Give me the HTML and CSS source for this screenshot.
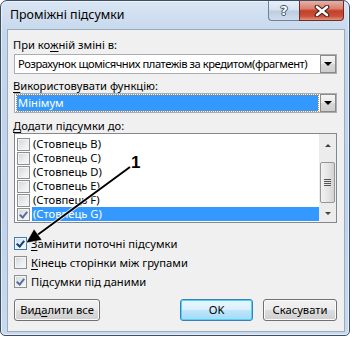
FILE: index.html
```html
<!DOCTYPE html>
<html lang="uk">
<head>
    <meta charset="UTF-8">
    <title>Проміжні підсумки</title>
    <link rel="stylesheet" href="styles.css">
</head>
<body>
  <div class="window">
    <div class="titlebar">
      <span class="title">Проміжні підсумки</span>
      <div class="cbtn help">?</div>
      <div class="cbtn close">
        <svg width="16" height="12" viewBox="0 0 16 12">
          <path d="M3 2 L13 10 M13 2 L3 10" stroke="#3b1c18" stroke-width="4.6" stroke-linecap="round"/>
          <path d="M3 2 L13 10 M13 2 L3 10" stroke="#fff" stroke-width="2.6" stroke-linecap="round"/>
        </svg>
      </div>
    </div>

    <div class="client">
      <div class="label l1">При ко<u>ж</u>ній зміні в:</div>
      <div class="combo">
        <div class="combo-text long">Розрахунок щомісячних платежів за кредитом(фрагмент)</div>
        <div class="drop"><span class="tri"></span></div>
      </div>

      <div class="label l2"><u>В</u>икористовувати функцію:</div>
      <div class="combo">
        <div class="combo-text"><span class="sel">Мінімум</span></div>
        <div class="drop"><span class="tri"></span></div>
      </div>

      <div class="label l3"><u>Д</u>одати підсумки до:</div>
      <div class="list">
        <div class="items">
          <div class="item"><span class="box"></span><span class="txt">(Стовпець B)</span></div>
          <div class="item"><span class="box"></span><span class="txt">(Стовпець C)</span></div>
          <div class="item"><span class="box"></span><span class="txt">(Стовпець D)</span></div>
          <div class="item"><span class="box"></span><span class="txt">(Стовпець E)</span></div>
          <div class="item"><span class="box"></span><span class="txt">(Стовпець F)</span></div>
          <div class="item"><span class="box checked light"></span><span class="txt active">(Стовпець G)</span></div>
        </div>
        <div class="scroll">
          <div class="sarrow"><span class="up"></span></div>
          <div class="thumb"><span class="grip"></span></div>
          <div class="sarrow"><span class="down"></span></div>
        </div>
      </div>

      <div class="checks">
        <div class="check"><span class="box checked focus"></span><span><u>З</u>амінити поточні підсумки</span></div>
        <div class="check"><span class="box"></span><span><u>К</u>інець сторінки між групами</span></div>
        <div class="check"><span class="box checked light"></span><span>Підсумки під даними</span></div>
      </div>

      <div class="buttons">
        <div class="btn">Вид<u>а</u>лити все</div>
        <div class="btn default">OK</div>
        <div class="btn">Скасувати</div>
      </div>
    </div>

    <svg class="annot" width="350" height="336" viewBox="0 0 350 336">
      <line x1="130" y1="167" x2="36" y2="236" stroke="#fff" stroke-width="4" stroke-opacity="0.7"/>
      <line x1="130" y1="167" x2="36" y2="236" stroke="#000" stroke-width="2"/>
      <polygon points="26,243 34,229 42,240" fill="#000" stroke="#fff" stroke-width="0.8" stroke-opacity="0.6"/>
      <text x="131" y="168" class="num">1</text>
    </svg>
  </div>
</body>
</html>
```

FILE: styles.css
```css
body{
    margin: 0;
    background: #fff;
    font-family: "Segoe UI", "Noto Sans", sans-serif;
    font-size: 11.2px;
    color: #000;
}
u{
    text-decoration: underline;
    text-underline-offset: 2px;
}

.window{
    position: relative;
    box-sizing: border-box;
    width: 350px;
    height: 336px;
    border: 1px solid #3b4f66;
    border-radius: 7px 7px 5px 5px;
    background: linear-gradient(to bottom, #d9e5f3 0%, #c5d7ec 10%, #bfd2ea 60%, #c9daee 100%);
    box-shadow: inset 0 0 0 1px rgba(255,255,255,0.55);
    padding: 0 4px 3px 6px;
    display: flex;
    flex-direction: column;
}

/* title bar */
.titlebar{
    height: 28px;
    display: flex;
    align-items: flex-start;
}
.title{
    margin: 6px 0 0 3px;
    line-height: 16px;
    font-size: 12.4px;
    color: #000;
}
.cbtn{
    box-sizing: border-box;
    height: 20px;
    display: flex;
    align-items: center;
    justify-content: center;
}
.help{
    margin-left: auto;
    width: 31px;
    border: 1px solid #6d8198;
    border-top: none;
    border-right: none;
    border-radius: 0 0 0 4px;
    background: linear-gradient(to bottom, #e8eff8 0%, #d5e1ee 48%, #bccde2 52%, #cfdcec 100%);
    color: #fff;
    font-family: "DejaVu Sans", sans-serif;
    font-weight: bold;
    font-size: 13px;
    text-shadow: 1px 0 0 #3e4f63, -1px 0 0 #3e4f63, 0 1px 0 #3e4f63, 0 -1px 0 #3e4f63;
}
.close{
    width: 45px;
    margin-right: 1px;
    border: 1px solid #6b2d24;
    border-top: none;
    border-radius: 0 0 4px 0;
    background: linear-gradient(to bottom, #eab0a2 0%, #d8816f 40%, #c43f2b 52%, #cc5039 80%, #e3927d 100%);
}

/* client area */
.client{
    flex: 1;
    background: #f0f0f0;
    border: 1px solid #9aabc0;
    padding: 7px 7px 0 6px;
    display: flex;
    flex-direction: column;
}
.label{
    line-height: 15px;
    height: 15px;
    margin-left: -1px;
}
.l2{ margin-top: 4px; }
.l3{ margin-top: 5px; }

.combo{
    box-sizing: border-box;
    height: 20px;
    margin-top: 2px;
    border: 1px solid #abadb3;
    background: #fff;
    display: flex;
}
.l2 + .combo{ margin-top: 0; }
.combo-text{
    flex: 1;
    padding: 1px 2px 1px 3px;
    line-height: 16px;
    white-space: nowrap;
    overflow: hidden;
}
.combo-text.long{
    letter-spacing: -0.45px;
}
.combo-text .sel{
    display: block;
    margin-left: -1px;
    background: #3399ff;
    color: #fff;
    padding-left: 1px;
    outline: 1px dotted #d08a3a;
}
.drop{
    box-sizing: border-box;
    width: 16px;
    border: 1px solid #8a8a8a;
    margin: 0;
    background: linear-gradient(to bottom, #f4f4f4 0%, #e8e8e8 50%, #d8d8d8 51%, #cdcdcd 100%);
    display: flex;
    align-items: center;
    justify-content: center;
}
.tri{
    width: 0;
    height: 0;
    border-left: 4px solid transparent;
    border-right: 4px solid transparent;
    border-top: 4px solid #000;
}

/* list */
.list{
    box-sizing: border-box;
    height: 90px;
    border: 1px solid #828790;
    background: #fff;
    display: flex;
}
.items{
    flex: 1;
    padding-top: 3px;
}
.item{
    height: 14px;
    display: flex;
    align-items: center;
    padding-left: 2px;
}
.item .box{
    margin-right: 2px;
}
.item .txt{
    flex: 1;
    line-height: 14px;
    padding-left: 1px;
}
.item .txt.active{
    background: #3399ff;
    color: #fff;
}

.box{
    box-sizing: border-box;
    width: 13px;
    height: 13px;
    flex: none;
    border: 1px solid #8e8f8f;
    background: linear-gradient(135deg, #d2d5da 0%, #eceef0 60%, #f8f8f8 100%);
    box-shadow: inset 0 0 0 1px #f4f4f4;
    position: relative;
}
.box.checked::after{
    content: "";
    position: absolute;
    left: 3px;
    top: 1px;
    width: 3px;
    height: 6px;
    border-right: 2px solid #1f3a69;
    border-bottom: 2px solid #1f3a69;
    transform: rotate(40deg);
}
.box.checked.light::after{
    border-color: #5a6f9c;
}
.box.focus{
    border-color: #3c7fb1;
    background: linear-gradient(135deg, #c6ddf3 0%, #e4f1fb 60%, #f4f9fd 100%);
}

.scroll{
    width: 17px;
    background: #ececec;
    display: flex;
    flex-direction: column;
    align-items: center;
}
.sarrow{
    height: 17px;
    width: 17px;
    display: flex;
    align-items: center;
    justify-content: center;
}
.sarrow:first-child{ margin-top: 3px; }
.sarrow:last-child{ margin-top: auto; }
.up, .down{
    width: 0;
    height: 0;
    border-left: 3px solid transparent;
    border-right: 3px solid transparent;
}
.up{ border-bottom: 3px solid #404040; }
.down{ border-top: 3px solid #404040; }
.thumb{
    box-sizing: border-box;
    width: 15px;
    height: 41px;
    margin-top: 8px;
    border: 1px solid #979797;
    border-radius: 2px;
    background: linear-gradient(to right, #f2f2f2 0%, #e2e2e2 60%, #d3d3d3 100%);
    display: flex;
    align-items: center;
    justify-content: center;
}
.grip{
    width: 7px;
    height: 7px;
    background: repeating-linear-gradient(to bottom, #555 0, #555 1px, transparent 1px, transparent 2px);
}

/* check boxes */
.checks{
    margin-top: 11px;
}
.check{
    height: 19px;
    display: flex;
    align-items: center;
}
.check .box{
    margin-right: 4px;
}

/* buttons */
.buttons{
    margin-top: 8px;
    display: flex;
}
.btn{
    box-sizing: border-box;
    height: 22px;
    border: 1px solid #707070;
    border-radius: 3px;
    background: linear-gradient(to bottom, #f2f2f2 0%, #ebebeb 50%, #dddddd 51%, #cfcfcf 100%);
    box-shadow: inset 0 0 0 1px #fbfbfb;
    line-height: 19px;
    text-align: center;
}
.btn:first-child{ width: 86px; }
.btn.default{
    width: 73px;
    margin-left: auto;
    border-color: #3c7fb1;
    box-shadow: inset 0 0 0 1px #48d7fb;
    background: linear-gradient(to bottom, #eaf6fd 0%, #d9f0fc 50%, #bee6fd 51%, #a7d9f5 100%);
}
.btn:last-child{
    width: 74px;
    margin-left: 10px;
}

/* annotation arrow */
.annot{
    position: absolute;
    left: -1px;
    top: -1px;
    pointer-events: none;
}
.num{
    font-family: "Liberation Sans", sans-serif;
    font-weight: bold;
    font-size: 17px;
    fill: #000;
    stroke: #fff;
    stroke-width: 0.5px;
    paint-order: stroke;
}
```
